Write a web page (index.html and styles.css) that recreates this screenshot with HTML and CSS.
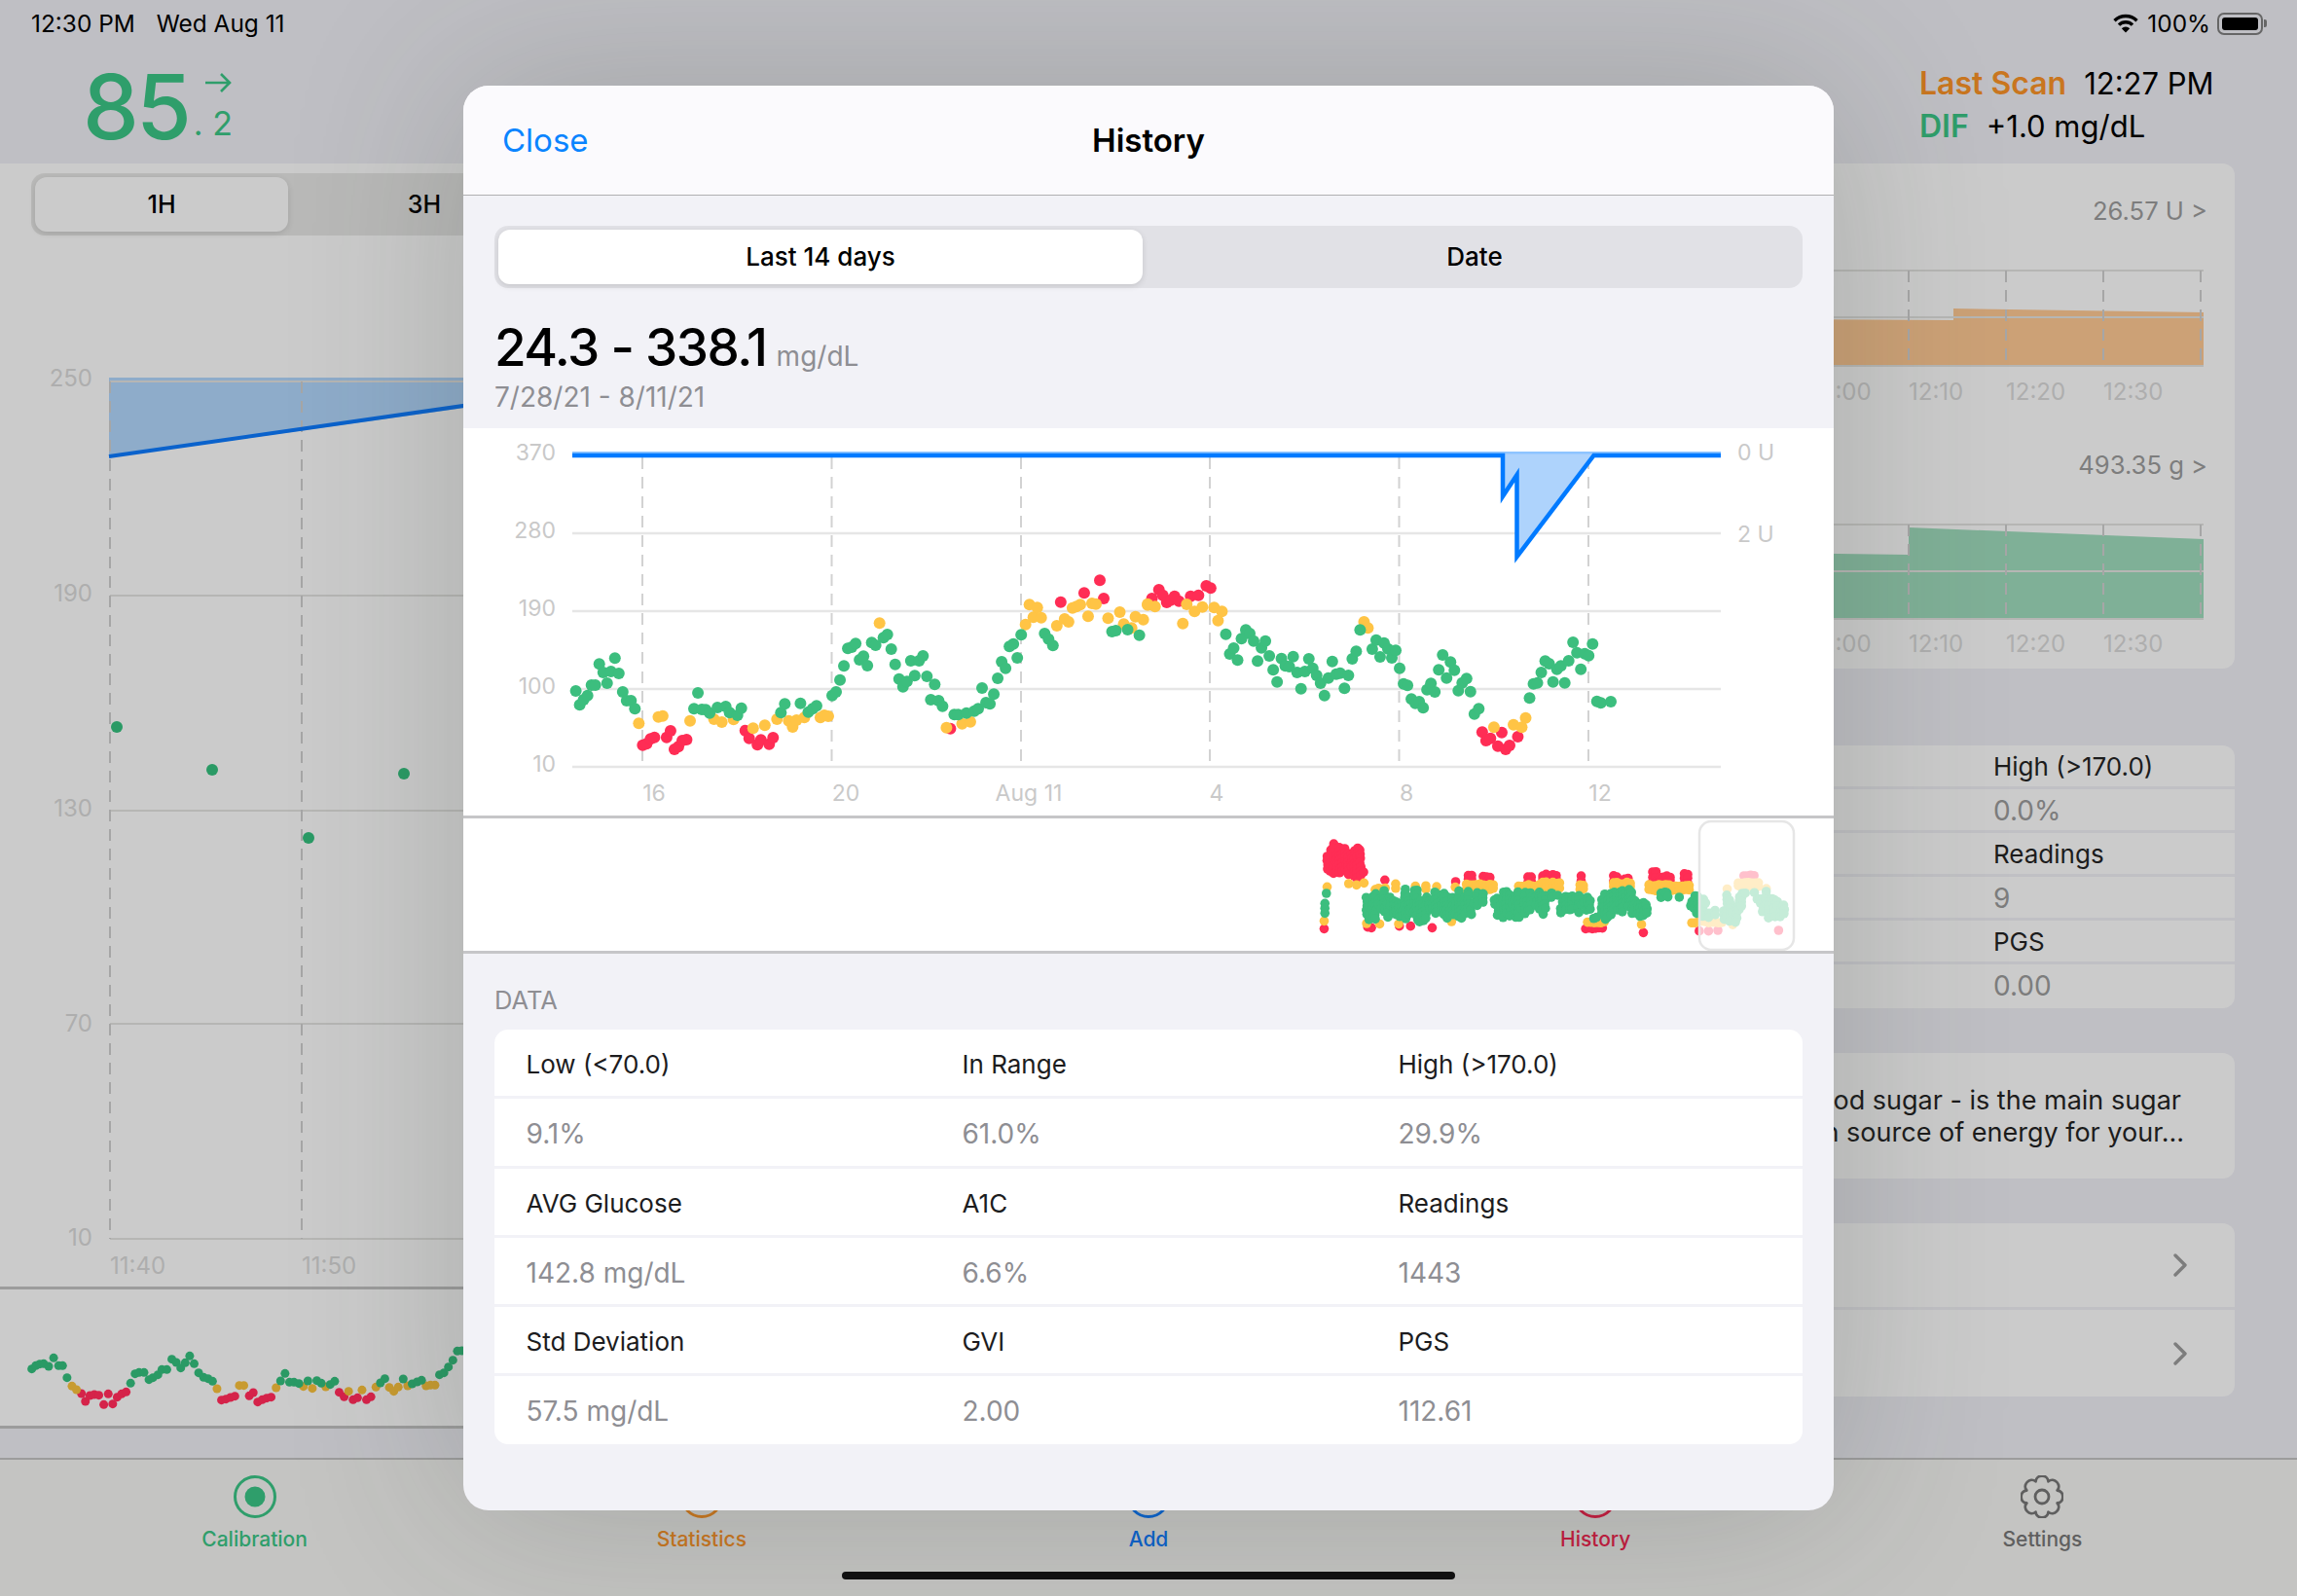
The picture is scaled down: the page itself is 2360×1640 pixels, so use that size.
FILE: index.html
```html
<!DOCTYPE html>
<html lang="en">
<head>
    <meta charset="UTF-8">
    <meta name="viewport" content="width=device-width, initial-scale=1.0">
    <title>Glucose - History</title>
    <link rel="stylesheet" href="styles.css">
</head>
<body>
    <div class="app">
        <div class="status-bar">
            <div class="status-left">
                <span>12:30 PM</span>
                <span>Wed Aug 11</span>
            </div>
            <div class="status-right">
                <svg class="wifi-icon" viewBox="0 0 26 20">
                    <path d="M1.5 7.2A16.5 16.5 0 0 1 24.5 7.2M6 11.6A10 10 0 0 1 20 11.6" fill="none" stroke="#000" stroke-width="3.4"/>
                    <path d="M13 19.5L8.8 15.2A6 6 0 0 1 17.2 15.2Z" fill="#000"/>
                </svg>
                <span>100%</span>
                <div class="battery"><div class="battery-fill"></div></div>
                <div class="battery-nub"></div>
            </div>
        </div>

        <div class="top-bar">
            <div class="reading">
                <span class="reading-value">85</span>
                <div class="reading-side">
                    <svg class="trend-arrow" viewBox="0 0 28 22">
                        <path d="M1 11H26M17 2L26 11L17 20" fill="none" stroke="#2f9e6b" stroke-width="2.6"/>
                    </svg>
                    <span class="reading-decimal">.&nbsp;2</span>
                </div>
            </div>
            <div class="last-scan">
                <div class="scan-row">
                    <span class="scan-label orange">Last Scan</span>
                    <span>12:27 PM</span>
                </div>
                <div class="scan-row">
                    <span class="scan-label green">DIF</span>
                    <span>+1.0 mg/dL</span>
                </div>
            </div>
        </div>

        <div class="main">
            <div class="left-col">
                <div class="range-tabs">
                    <div class="range-tab active">1H</div>
                    <div class="range-tab">3H</div>
                </div>
                <svg class="bg-chart" viewBox="0 242 1180 1083">
                    <path d="M112 388H700V388L112 470Z" fill="#8eacca"/>
                    <path d="M113 392H700M113 612H700M113 833H700M113 1052H700M113 1273H700" class="bg-grid"/>
                    <path d="M113 392V1273M310 392V1273" class="bg-dash"/>
                    <path d="M112 469L700 385" fill="none" stroke="#0a62cc" stroke-width="4"/>
                    <circle cx="120" cy="747" r="6" class="bg-dot"/>
                    <circle cx="218" cy="791" r="6" class="bg-dot"/>
                    <circle cx="317" cy="861" r="6" class="bg-dot"/>
                    <circle cx="415" cy="795" r="6" class="bg-dot"/>
                    <text x="95" y="397" class="bg-label end">250</text>
                    <text x="95" y="618" class="bg-label end">190</text>
                    <text x="95" y="839" class="bg-label end">130</text>
                    <text x="95" y="1060" class="bg-label end">70</text>
                    <text x="95" y="1280" class="bg-label end">10</text>
                    <text x="113" y="1309" class="bg-label">11:40</text>
                    <text x="310" y="1309" class="bg-label">11:50</text>
                </svg>
                <svg id="bg-mini" class="bg-mini" viewBox="0 1325 1180 140"></svg>
            </div>

            <div class="right-col">
                <div class="card">
                    <div class="sub-chart">
                        <div class="sub-value">26.57 U &gt;</div>
                        <svg class="sub-svg" viewBox="1180 270 1116 151">
                            <path d="M1500 326L2007 329V317L2264 321V376H1500Z" fill="#cca176"/>
                            <path d="M1500 278H2264M1500 326H2264M1500 376H2264" class="bg-grid"/>
                            <path d="M1961 278V376M2061 278V376M2161 278V376M2261 278V376" class="bg-dash"/>
                            <text x="1861" y="411" class="bg-label">12:00</text>
                            <text x="1961" y="411" class="bg-label">12:10</text>
                            <text x="2061" y="411" class="bg-label">12:20</text>
                            <text x="2161" y="411" class="bg-label">12:30</text>
                        </svg>
                    </div>
                    <div class="sub-chart second">
                        <div class="sub-value">493.35 g &gt;</div>
                        <svg class="sub-svg" viewBox="1180 530 1116 151">
                            <path d="M1500 563L1961 569V541L2264 553V635H1500Z" fill="#7fb097"/>
                            <path d="M1500 538H2264M1500 586H2264M1500 635H2264" class="bg-grid"/>
                            <path d="M1961 538V635M2061 538V635M2161 538V635M2261 538V635" class="bg-dash"/>
                            <text x="1861" y="669" class="bg-label">12:00</text>
                            <text x="1961" y="669" class="bg-label">12:10</text>
                            <text x="2061" y="669" class="bg-label">12:20</text>
                            <text x="2161" y="669" class="bg-label">12:30</text>
                        </svg>
                    </div>
                </div>

                <div class="card stats-card">
                    <div class="stats-row">High (&gt;170.0)</div>
                    <div class="stats-row value">0.0%</div>
                    <div class="stats-row">Readings</div>
                    <div class="stats-row value">9</div>
                    <div class="stats-row">PGS</div>
                    <div class="stats-row value">0.00</div>
                </div>

                <div class="card info-card">
                    <div>blood sugar - is the main sugar</div>
                    <div class="info-line">main source of energy for your...</div>
                </div>

                <div class="card links-card">
                    <div class="link-row">
                        <svg class="chevron" viewBox="0 0 14 24"><path d="M2 2L12 12L2 22"/></svg>
                    </div>
                    <div class="link-row">
                        <svg class="chevron" viewBox="0 0 14 24"><path d="M2 2L12 12L2 22"/></svg>
                    </div>
                </div>
            </div>
        </div>

        <div class="tab-bar">
            <div class="tab green">
                <svg class="tab-icon" viewBox="0 0 44 44">
                    <circle cx="22" cy="22" r="20.5" fill="none" stroke="currentColor" stroke-width="3"/>
                    <circle cx="22" cy="22" r="10.5" fill="currentColor"/>
                </svg>
                <span>Calibration</span>
            </div>
            <div class="tab orange">
                <svg class="tab-icon" viewBox="0 0 44 44"><circle cx="22" cy="22" r="20.5" fill="none" stroke="currentColor" stroke-width="3"/></svg>
                <span>Statistics</span>
            </div>
            <div class="tab blue">
                <svg class="tab-icon" viewBox="0 0 44 44"><circle cx="22" cy="22" r="20.5" fill="none" stroke="currentColor" stroke-width="3"/></svg>
                <span>Add</span>
            </div>
            <div class="tab red">
                <svg class="tab-icon" viewBox="0 0 44 44"><circle cx="22" cy="22" r="20.5" fill="none" stroke="currentColor" stroke-width="3"/></svg>
                <span>History</span>
            </div>
            <div class="tab grey">
                <svg class="tab-icon" viewBox="0 0 44 44">
                    <path id="gear-path" fill="none" stroke="currentColor" stroke-width="2.8" stroke-linejoin="round"/>
                    <circle cx="22" cy="22" r="7" fill="none" stroke="currentColor" stroke-width="2.8"/>
                </svg>
                <span>Settings</span>
            </div>
        </div>

        <div class="modal">
            <div class="modal-header">
                <span class="close-link">Close</span>
                <span class="modal-title">History</span>
            </div>
            <div class="modal-tabs">
                <div class="modal-tab active">Last 14 days</div>
                <div class="modal-tab">Date</div>
            </div>
            <div class="range-summary">
                <div class="range-line">
                    <span class="range-big">24.3 - 338.1</span>
                    <span class="range-unit">mg/dL</span>
                </div>
                <div class="range-dates">7/28/21 - 8/11/21</div>
            </div>
            <svg id="main-chart" class="main-chart" viewBox="476 440 1408 398">
                <path d="M588 548H1768M588 628H1768M588 708H1768M588 788H1768" class="chart-grid"/>
                <path d="M660 470V788M854.5 470V788M1049 470V788M1243 470V788M1437.5 470V788M1632 470V788" class="chart-dash"/>
                <text x="571" y="473" class="chart-label end">370</text>
                <text x="571" y="553" class="chart-label end">280</text>
                <text x="571" y="633" class="chart-label end">190</text>
                <text x="571" y="713" class="chart-label end">100</text>
                <text x="571" y="793" class="chart-label end">10</text>
                <text x="1785" y="473" class="chart-label">0 U</text>
                <text x="1785" y="557" class="chart-label">2 U</text>
                <text x="672" y="823" class="chart-label mid">16</text>
                <text x="869" y="823" class="chart-label mid">20</text>
                <text x="1057" y="823" class="chart-label mid">Aug 11</text>
                <text x="1250" y="823" class="chart-label mid">4</text>
                <text x="1445" y="823" class="chart-label mid">8</text>
                <text x="1644" y="823" class="chart-label mid">12</text>
                <g id="main-dots"></g>
                <path d="M1544 464H1638L1558.5 572V488L1544 510Z" fill="#aed3fc"/>
                <rect x="588" y="464" width="1180" height="2.5" fill="#8ec4ff"/>
                <path d="M588 468H1544V510L1558.5 488V572L1637.5 468H1768" fill="none" stroke="#007aff" stroke-width="4.5"/>
            </svg>
            <svg id="mini-chart" class="mini-chart" viewBox="476 841 1408 136"></svg>
            <div class="data-title">DATA</div>
            <div class="data-table">
                <div class="data-cell">Low (&lt;70.0)</div>
                <div class="data-cell">In Range</div>
                <div class="data-cell">High (&gt;170.0)</div>
                <div class="data-cell value">9.1%</div>
                <div class="data-cell value">61.0%</div>
                <div class="data-cell value">29.9%</div>
                <div class="data-cell">AVG Glucose</div>
                <div class="data-cell">A1C</div>
                <div class="data-cell">Readings</div>
                <div class="data-cell value">142.8 mg/dL</div>
                <div class="data-cell value">6.6%</div>
                <div class="data-cell value">1443</div>
                <div class="data-cell">Std Deviation</div>
                <div class="data-cell">GVI</div>
                <div class="data-cell">PGS</div>
                <div class="data-cell value">57.5 mg/dL</div>
                <div class="data-cell value">2.00</div>
                <div class="data-cell value">112.61</div>
            </div>
        </div>

        <div class="home-indicator"></div>
    </div>

    <script src="charts.js"></script>
</body>
</html>
```

FILE: styles.css
```css
* {
    box-sizing: border-box;
}
body {
    margin: 0;
    font-family: Inter, "Noto Sans", sans-serif;
    color: #000;
}
.app {
    position: relative;
    width: 2360px;
    height: 1640px;
    overflow: hidden;
    background-color: #bfbfc4;
}
.orange { color: #c9761f; }
.green { color: #2f9e6b; }
.blue { color: #0a62cc; }
.red { color: #c41c3f; }
.grey { color: #5f5f5f; }

/* status bar */
.status-bar {
    height: 48px;
    display: flex;
    justify-content: space-between;
    align-items: center;
    padding: 0 31px 0 32px;
    font-size: 24.4px;
}
.status-left {
    display: flex;
    gap: 22px;
}
.status-right {
    display: flex;
    align-items: center;
}
.wifi-icon {
    width: 26px;
    height: 20px;
    margin-right: 9px;
}
.battery {
    width: 47px;
    height: 23px;
    margin-left: 7px;
    padding: 3px;
    border: 2px solid #666;
    border-radius: 7px;
}
.battery-fill {
    height: 100%;
    background-color: #000;
    border-radius: 3px;
}
.battery-nub {
    width: 3px;
    height: 8px;
    margin-left: 1px;
    background-color: #666;
    border-radius: 0 2px 2px 0;
}

/* current reading */
.top-bar {
    height: 120px;
    display: flex;
    justify-content: space-between;
}
.reading {
    display: flex;
    margin-left: 85px;
    height: 110px;
    color: #2f9e6b;
}
.reading-value {
    margin-top: 9px;
    font-size: 92px;
    font-weight: 500;
    line-height: 106px;
    letter-spacing: -3px;
}
.reading-side {
    display: flex;
    flex-direction: column;
    margin-left: 5px;
}
.trend-arrow {
    width: 28px;
    height: 22px;
    margin: 26px 0 0 11px;
}
.reading-decimal {
    font-size: 34px;
    line-height: 40px;
    margin-top: 11px;
}
.last-scan {
    width: 388px;
    padding-top: 16px;
    font-size: 31px;
    line-height: 44px;
}
.scan-row {
    display: flex;
    gap: 18px;
}
.scan-label {
    font-size: 32px;
    font-weight: 600;
}

/* background content behind the sheet */
.main {
    height: 1330px;
    display: flex;
}
.left-col {
    width: 1180px;
    background-color: #cbcbcb;
    height: 1297px;
}
.range-tabs {
    display: flex;
    height: 64px;
    margin: 10px 0 0 32px;
    padding: 4px;
    background-color: #b9b9b8;
    border-radius: 14px;
}
.range-tab {
    width: 270px;
    display: flex;
    align-items: center;
    justify-content: center;
    font-size: 25px;
    font-weight: 500;
}
.range-tab.active {
    width: 260px;
    margin-right: 5px;
    background-color: #cbcbcb;
    border-radius: 12px;
    box-shadow: 0 2px 6px rgba(0, 0, 0, 0.12);
}
.bg-chart {
    display: block;
    width: 1180px;
    height: 1083px;
}
.bg-mini {
    display: block;
    width: 1180px;
    height: 140px;
    border-top: 3px solid #9c9c9c;
    border-bottom: 3px solid #9c9c9c;
    box-sizing: content-box;
    margin-top: -3px;
}
.bg-grid {
    fill: none;
    stroke: #b6b6b4;
    stroke-width: 2;
}
.bg-dash {
    fill: none;
    stroke: #a6a6a6;
    stroke-width: 2;
    stroke-dasharray: 12 8;
}
.bg-dot {
    fill: #2a9a65;
}
.bg-label {
    font-size: 24px;
    fill: #aeaeae;
}
.end {
    text-anchor: end;
}
.mid {
    text-anchor: middle;
}
.right-col {
    flex: 1;
    padding-right: 64px;
}
.card {
    background-color: #cbcbcb;
    border-radius: 12px;
}
.sub-chart {
    padding-top: 32px;
}
.sub-chart.second {
    padding-top: 40px;
    padding-bottom: 5px;
}
.sub-value {
    height: 34px;
    line-height: 34px;
    margin-bottom: 36px;
    padding-right: 28px;
    text-align: right;
    font-size: 25.6px;
    color: #7d7d7d;
}
.sub-svg {
    display: block;
    width: 100%;
    height: 151px;
}
.stats-card {
    margin-top: 79px;
}
.stats-row {
    height: 45px;
    padding-left: 868px;
    font-size: 26px;
    line-height: 43px;
    color: #1c1c1c;
    border-bottom: 3px solid #c0c0c4;
}
.stats-row:last-child {
    border-bottom: none;
}
.stats-row.value {
    font-size: 28px;
    line-height: 44px;
    color: #7d7d7d;
}
.info-card {
    margin-top: 46px;
    padding: 32px 55px 0 0;
    height: 129px;
    font-size: 27px;
    line-height: 33px;
    text-align: right;
    white-space: nowrap;
    overflow: hidden;
    color: #1c1c1c;
}
.info-line {
    margin-right: -3px;
}
.links-card {
    margin-top: 46px;
}
.link-row {
    height: 89px;
    display: flex;
    align-items: center;
    justify-content: flex-end;
    padding-right: 49px;
    border-bottom: 3px solid #c0c0c4;
}
.link-row:last-child {
    border-bottom: none;
}
.chevron {
    width: 14px;
    height: 24px;
}
.chevron path {
    fill: none;
    stroke: #7d7d7d;
    stroke-width: 3.4;
    stroke-linecap: round;
    stroke-linejoin: round;
}

/* tab bar */
.tab-bar {
    position: absolute;
    left: 0;
    right: 0;
    bottom: 0;
    height: 142px;
    display: flex;
    padding: 16px 32px 0;
    background-color: #c4c4c2;
    border-top: 2px solid #9c9c9c;
}
.tab {
    flex: 1;
    display: flex;
    flex-direction: column;
    align-items: center;
    gap: 10px;
    font-size: 21px;
    font-weight: 500;
    line-height: 24px;
}
.tab-icon {
    width: 44px;
    height: 44px;
}

/* history sheet */
.modal {
    position: absolute;
    left: 476px;
    top: 88px;
    width: 1408px;
    height: 1464px;
    overflow: hidden;
    background-color: #f2f2f7;
    border-radius: 26px;
    box-shadow: 0 0 180px rgba(50, 60, 50, 0.22);
}
.modal-header {
    position: relative;
    height: 113px;
    display: flex;
    align-items: center;
    justify-content: center;
    background-color: #fbfafd;
    border-bottom: 1.5px solid #b0b0b2;
    font-size: 33px;
}
.close-link {
    position: absolute;
    left: 40px;
    color: #0a84ff;
}
.modal-title {
    font-weight: 600;
}
.modal-tabs {
    display: flex;
    height: 64px;
    margin: 31px 32px 0;
    padding: 4px;
    background-color: #e1e1e6;
    border-radius: 14px;
}
.modal-tab {
    flex: 1;
    display: flex;
    align-items: center;
    justify-content: center;
    padding: 0 0 2px 8px;
    font-size: 26px;
    font-weight: 500;
}
.modal-tab.active {
    flex: none;
    width: 662px;
    padding-left: 0;
    background-color: #fff;
    border-radius: 12px;
    box-shadow: 0 2px 6px rgba(0, 0, 0, 0.12);
}
.range-summary {
    height: 144px;
    padding: 28px 32px 0;
}
.range-line {
    display: flex;
    align-items: baseline;
    gap: 10px;
    height: 66px;
    line-height: 66px;
}
.range-big {
    font-size: 53px;
    font-weight: 500;
    letter-spacing: -1.5px;
}
.range-unit {
    font-size: 28px;
    color: #8e8e93;
}
.range-dates {
    font-size: 28px;
    line-height: 36px;
    color: #8e8e93;
}
.main-chart {
    display: block;
    width: 1408px;
    height: 398px;
    background-color: #fff;
}
.chart-grid {
    fill: none;
    stroke: #e6e6e6;
    stroke-width: 2.5;
}
.chart-dash {
    fill: none;
    stroke: #d2d2d2;
    stroke-width: 2;
    stroke-dasharray: 12 8;
}
.chart-label {
    font-size: 23px;
    fill: #c9c9c9;
}
.mini-chart {
    display: block;
    width: 1408px;
    height: 136px;
    box-sizing: content-box;
    background-color: #fff;
    border-top: 3px solid #c6c6c8;
    border-bottom: 3px solid #c6c6c8;
}
.data-title {
    height: 78px;
    padding: 31px 32px 0;
    font-size: 25.5px;
    line-height: 34px;
    color: #8e8e93;
}
.data-table {
    display: grid;
    grid-template-columns: repeat(3, 1fr);
    grid-auto-rows: 71.3px;
    height: 426px;
    margin: 0 32px;
    background-color: #fff;
    border-radius: 14px;
    overflow: hidden;
}
.data-cell {
    padding-left: 32.5px;
    font-size: 26px;
    line-height: 71px;
    color: #1c1c1e;
    border-bottom: 3px solid #f2f2f7;
}
.data-cell:nth-last-child(-n+3) {
    border-bottom: none;
}
.data-cell.value {
    font-size: 28px;
    line-height: 72px;
    color: #8e8e93;
}
.home-indicator {
    position: absolute;
    left: 865px;
    top: 1615px;
    width: 630px;
    height: 8px;
    background-color: #111;
    border-radius: 4px;
}
```

FILE: charts.js
```js
const SVG_NS = 'http://www.w3.org/2000/svg';

const GREEN = '#3cbe7e';
const YELLOW = '#ffc445';
const RED = '#ff2d55';

function addDots(parent, points, r, color) {
    points.forEach(function (p) {
        const dot = document.createElementNS(SVG_NS, 'circle');
        dot.setAttribute('cx', p[0]);
        dot.setAttribute('cy', p[1]);
        dot.setAttribute('r', r);
        dot.setAttribute('fill', color);
        parent.appendChild(dot);
    });
}

// points were read off two enlarged crops, so they are scaled back here
function fromCrop(points, left) {
    return points.map(function (p) {
        return [left + p[0] / 2.24, 420 + p[1] / 3];
    });
}

function drawMainChart() {
    const group = document.getElementById('main-dots');

    addDots(group, fromCrop([[404,1037],[413,1033],[422,1018],[431,1013],[459,1013],[468,993],[477,1050],[486,1042],[495,1023],[505,1020],
        [640,992],[649,1016],[668,1036],[676,1021],[695,1034],[704,1014],[1112,986],[1366,596],[1420,568],[1456,529],[1465,585]], 480), 6, RED);
    addDots(group, fromCrop([[8,585],[24,558],[33,575],[42,597],[51,590],[60,578],[70,593],[97,578],[115,575],[133,546],[143,553],
        [768,997],[777,1023],[787,1016],[804,1040],[813,998],[822,1050],[831,1038],[850,1011]], 1180), 6, RED);

    addDots(group, fromCrop([[395,970],[440,950],[450,947],[513,962],[568,957],[586,966],[613,958],[658,985],[685,976],[713,957],[740,962],
        [749,981],[758,960],[776,952],[813,952],[822,945],[831,948],[949,661],[1103,983],[1139,971],[1158,965],[1285,665],[1294,604],[1303,643],
        [1312,613],[1321,644],[1357,669],[1375,648],[1384,657],[1393,614],[1402,610],[1411,604],[1429,640],[1438,600],[1447,602],[1475,646],
        [1502,627],[1511,664],[1529,676],[1538,641],[1556,650],[1566,602]], 480), 6, YELLOW);
    addDots(group, fromCrop([[-2,605],[15,610],[79,662],[88,603],[106,625],[124,611],[151,613],[160,653],[169,625],[496,657],[505,676],
        [795,982],[840,974],[859,982],[868,953]], 1180), 6, YELLOW);

    addDots(group, fromCrop([[250,870],[259,913],[268,897],[277,884],[286,852],[295,852],[304,787],[313,813],[322,846],[331,810],[340,769],
        [349,816],[358,873],[367,900],[377,900],[386,925],[522,925],[531,876],[540,927],[549,928],[558,938],[576,921],[595,918],[604,937],[622,945],
        [631,923],[722,937],[731,910],[767,908],[785,935],[795,925],[804,916],[840,884],[849,873],[858,836],[867,793],[876,739],[885,735],[894,724],
        [903,774],[912,763],[921,792],[931,721],[940,729],[958,706],[967,696],[976,741],[985,788],[994,833],[1003,857],[1012,841],[1021,777],
        [1030,823],[1040,777],[1049,762],[1058,825],[1067,897],[1076,850],[1085,900],[1094,917],[1121,943],[1130,943],[1149,938],[1167,932],
        [1176,925],[1185,861],[1194,906],[1203,910],[1212,880],[1221,831],[1230,780],[1239,800],[1248,733],[1257,725],[1266,768],[1275,697],
        [1329,693],[1338,710],[1348,730],[1484,687],[1493,684],[1520,681],[1547,698]], 480), 6, GREEN);
    addDots(group, fromCrop([[178,695],[187,756],[196,738],[205,775],[214,709],[224,682],[233,693],[242,716],[251,778],[260,737],[269,716],
        [278,762],[287,805],[296,842],[306,770],[315,793],[324,795],[333,764],[342,813],[351,863],[360,810],[369,771],[378,800],[387,822],[396,846],
        [405,884],[414,830],[423,779],[432,818],[441,815],[451,862],[460,822],[469,771],[478,748],[487,682],[515,741],[524,713],[533,765],[542,722],
        [551,740],[560,768],[569,745],[578,800],[587,848],[596,853],[605,895],[614,908],[623,903],[632,922],[641,866],[650,847],[659,873],[668,805],
        [677,759],[686,830],[695,781],[704,806],[713,869],[722,845],[732,832],[741,872],[750,941],[760,925],[877,892],[886,848],[895,845],[904,813],
        [913,778],[922,786],[931,842],[940,803],[949,793],[958,845],[967,777],[977,720],[986,752],[995,803],[1004,755],[1013,761],[1022,725],
        [1032,902],[1041,907],[1064,903]], 1180), 6, GREEN);
}

// small repeatable random numbers so the overview looks the same every time
let seed = 7;
function rand() {
    seed = (seed * 16807) % 2147483647;
    return seed / 2147483647;
}

function bandAt(band, x) {
    for (let i = 1; i < band.length; i++) {
        if (x <= band[i][0]) {
            const a = band[i - 1];
            const b = band[i];
            const t = (x - a[0]) / (b[0] - a[0]);
            return [a[1] + (b[1] - a[1]) * t, a[2] + (b[2] - a[2]) * t];
        }
    }
    return [band[band.length - 1][1], band[band.length - 1][2]];
}

// columns of dots with uneven ends, so the band edge comes out spiky
function fillBand(band, jitter) {
    const points = [];
    const start = band[0][0];
    const end = band[band.length - 1][0];
    for (let x = start; x <= end; x += 8) {
        const range = bandAt(band, x);
        const a = rand();
        const b = rand();
        const top = range[0] + a * a * jitter;
        const bottom = range[1] - b * b * jitter;
        for (let y = top; y <= bottom; y += 13) {
            points.push([x + rand() * 4, y]);
        }
    }
    return points;
}

// [x from, x to, y from, y to]
function clusters(ranges) {
    const points = [];
    ranges.forEach(function (r) {
        for (let x = r[0]; x <= r[1]; x += 9) {
            for (let y = r[2]; y <= r[3]; y += 13) {
                points.push([x, y + rand() * 6 - 3]);
            }
        }
    });
    return points;
}

function drawMiniChart() {
    const svg = document.getElementById('mini-chart');
    const scale = function (points) {
        return points.map(function (p) {
            return [1300 + p[0] / 2.613, 830 + p[1] / 3];
        });
    };

    const hump = [[165,150,225],[180,105,225],[200,120,235],[215,125,225],[225,150,225],[240,115,235],[255,130,235],[268,210,235]];
    const greenBand = [[270,275,345],[290,265,350],[320,255,345],[350,258,340],[375,250,350],[400,255,355],[430,250,350],[460,258,355],
        [490,265,345],[510,255,350],[545,258,340],[570,260,310],[600,262,280],[625,265,350],[655,250,350],[680,258,345],[710,262,320],
        [735,255,345],[770,262,270],[790,275,345],[820,272,325],[850,258,335],[865,270,350],[885,320,355],[915,255,350],[945,262,320],
        [970,250,345],[1000,260,350],[1020,290,340],[1040,250,290],[1070,260,280],[1100,260,290],[1135,255,270],[1145,270,340],[1185,280,345],
        [1210,320,350],[1240,265,350],[1258,320,365],[1275,255,340],[1300,255,270],[1330,260,330],[1345,250,345],[1370,290,350],[1395,265,340]];

    const reds = scale(fillBand(hump, 40).concat(clusters([[545,555,210,232],[585,605,215,235],[705,720,215,235],[745,785,208,235],[848,856,212,235],
        [935,945,212,235],[965,975,220,235],[1040,1050,200,235],[1060,1095,212,235],[1125,1140,205,235],[860,910,372,380],[1285,1315,207,215]]),
        [[158,373],[321,223],[511,228],[285,370],[275,368],[360,365],[390,365],[448,370],[1015,385],[1165,380],[1190,380],[1215,378],[1378,378]]));
    const yellows = scale(clusters([[295,325,250,255],[350,350,235,252],[403,403,240,252],[431,431,238,252],[460,460,245,255],[510,510,245,255],
        [540,615,238,258],[680,735,240,255],[745,795,232,255],[845,855,238,255],[935,980,232,255],[1030,1140,240,258],[272,272,357,357],[307,307,358,358],
        [358,358,357,357],[500,500,350,350],[865,915,352,360],[1010,1010,360,360],[1145,1230,352,356],[1255,1255,362,362],[1240,1240,252,252],
        [1270,1325,230,252],[1345,1345,250,250]]).concat([[158,349],[166,244],[224,234],[245,238],[265,232]]));
    const greens = scale(fillBand(greenBand, 45).concat([[164,264],[160,295],[160,310],[160,325]]));

    addDots(svg, reds, 4.8, RED);
    addDots(svg, yellows, 4.8, YELLOW);
    addDots(svg, greens, 4.8, GREEN);

    // the selected window sits over the dots
    const win = document.createElementNS(SVG_NS, 'rect');
    win.setAttribute('x', 1746);
    win.setAttribute('y', 844);
    win.setAttribute('width', 97);
    win.setAttribute('height', 132);
    win.setAttribute('rx', 12);
    win.setAttribute('fill', 'rgba(255,255,255,0.7)');
    win.setAttribute('stroke', '#e6e6e6');
    win.setAttribute('stroke-width', 2.5);
    svg.appendChild(win);
}

function drawBackgroundMini() {
    const svg = document.getElementById('bg-mini');
    const scale = function (points) {
        return points.map(function (p) {
            return [p[0] / 1.96, 1240 + p[1] / 3];
        });
    };
    addDots(svg, scale([[164,576],[172,600],[181,582],[190,579],[199,581],[209,610],[218,577],[227,608],[236,587],[245,577],[254,571],[446,596],
        [455,593],[464,588],[473,584],[502,583],[510,573],[519,602],[528,595],[537,590],[546,587],[683,572],[693,586],[711,595],[720,589],[738,595],[747,586]]), 4.5, '#d5234a');
    addDots(svg, scale([[145,553],[154,564],[437,561],[482,551],[491,551],[556,558],[611,554],[629,560],[656,555],[702,569],[729,565],[757,556],
        [784,557],[793,569],[802,556],[821,552],[858,552],[867,550],[876,550]]), 4.5, '#c89b30');
    addDots(svg, scale([[64,500],[72,490],[80,485],[88,484],[98,492],[108,466],[118,490],[126,490],[135,527],[263,544],[272,515],[280,511],[290,511],
        [300,533],[308,527],[318,518],[326,502],[336,502],[346,470],[355,480],[364,497],[373,481],[382,460],[391,484],[400,512],[410,526],[419,530],[428,538],
        [565,537],[574,514],[583,541],[592,541],[602,545],[620,537],[638,536],[647,544],[665,548],[674,538],[766,543],[775,530],[812,531],[830,546],[840,540],
        [849,535],[885,518],[894,512],[903,494],[912,473],[921,445],[930,444]]), 4.5, '#2a9a65');
}

function drawGear() {
    const pt = function (deg, r) {
        const a = deg * Math.PI / 180;
        return (22 + r * Math.cos(a)).toFixed(2) + ' ' + (22 + r * Math.sin(a)).toFixed(2);
    };
    let d = 'M' + pt(-112.5, 17);
    for (let i = 0; i < 8; i++) {
        const mid = -90 + i * 45;
        d += 'C' + pt(mid - 14, 24) + ' ' + pt(mid + 14, 24) + ' ' + pt(mid + 22.5, 17);
    }
    document.getElementById('gear-path').setAttribute('d', d + 'Z');
}

drawMainChart();
drawMiniChart();
drawBackgroundMini();
drawGear();
```
